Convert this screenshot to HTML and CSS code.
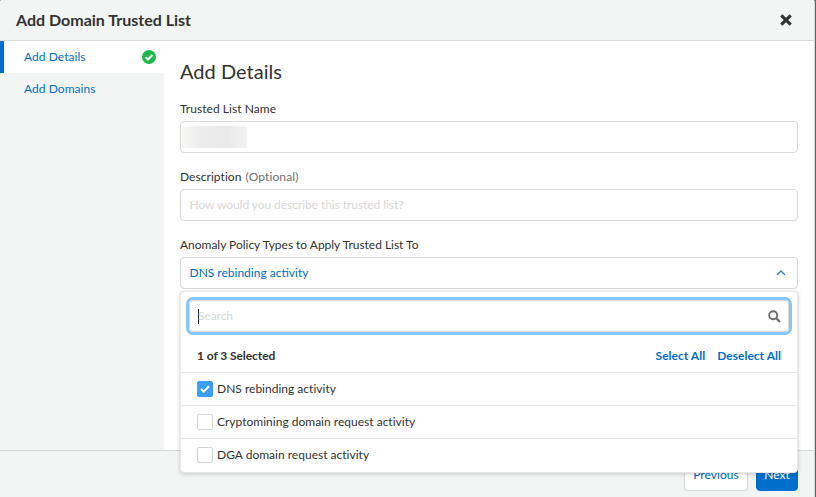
FILE: index.html
```html
<!DOCTYPE html>
<html lang="en">
<head>
<meta charset="utf-8">
<title>Add Domain Trusted List</title>
<link rel="stylesheet" href="styles.css">
</head>
<body>
<div class="modal">
  <header class="modal-header">
    <h1 class="modal-title">Add Domain Trusted List</h1>
    <svg class="close" width="12" height="12" viewBox="0 0 12 12"><path d="M1.3 1.3L10.7 10.7M10.7 1.3L1.3 10.7"/></svg>
  </header>
  <div class="modal-body">
    <nav class="steps">
      <div class="step active"><span>Add Details</span>
        <svg width="14" height="14" viewBox="0 0 14 14"><circle cx="7" cy="7" r="7" fill="#1fb749"/><path d="M3.6 7.2L6 9.5L10.4 5" fill="none" stroke="#fff" stroke-width="2"/></svg>
      </div>
      <div class="step"><span>Add Domains</span></div>
    </nav>
    <main class="content">
      <h2 class="heading">Add Details</h2>
      <div class="field">
        <div class="label">Trusted List Name</div>
        <div class="input"><span class="redacted"></span></div>
      </div>
      <div class="field">
        <div class="label">Description <span class="optional">(Optional)</span></div>
        <div class="input"><span class="placeholder">How would you describe this trusted list?</span></div>
      </div>
      <div class="field">
        <div class="label policy">Anomaly Policy Types to Apply Trusted List To</div>
        <div class="input select"><span class="value">DNS rebinding activity</span>
          <svg width="10" height="6" viewBox="0 0 10 6"><path d="M1 5L5 1L9 5" fill="none" stroke="#2583d6" stroke-width="1.3"/></svg>
        </div>
        <div class="dropdown">
          <div class="search"><span class="caret"></span><span class="placeholder">Search</span>
            <svg width="13" height="13" viewBox="0 0 13 13"><circle cx="5.2" cy="5.2" r="4" fill="none" stroke="#6d6d6d" stroke-width="1.9"/><path d="M8.2 8.2L12 12" stroke="#6d6d6d" stroke-width="2.2"/></svg>
          </div>
          <div class="summary"><span class="count">1 of 3 Selected</span><span class="link">Select All</span><span class="link deselect">Deselect All</span></div>
          <div class="option"><span class="box checked"><svg width="10" height="8" viewBox="0 0 10 8"><path d="M1 4L3.7 6.6L9 1.3" fill="none" stroke="#fff" stroke-width="2"/></svg></span><span>DNS rebinding activity</span></div>
          <div class="option"><span class="box"></span><span>Cryptomining domain request activity</span></div>
          <div class="option"><span class="box"></span><span>DGA domain request activity</span></div>
        </div>
      </div>
    </main>
  </div>
  <footer class="modal-footer">
    <div class="btn previous">Previous</div>
    <div class="btn next">Next</div>
  </footer>
</div>
</body>
</html>
```

FILE: styles.css
```css
* { box-sizing: border-box; }
body {
  margin: 0;
  width: 816px;
  height: 497px;
  overflow: hidden;
  background: #606162;
  font: 12px/16px Lato, sans-serif;
  letter-spacing: 0.05px;
  color: #333;
}
.modal {
  width: 815px;
  height: 497px;
  display: flex;
  flex-direction: column;
  background: #fff;
  border-right: 1px solid #d9dada;
  border-radius: 2px 2px 0 0;
  overflow: hidden;
}
.modal-header {
  height: 41px;
  flex: none;
  display: flex;
  align-items: center;
  justify-content: space-between;
  padding: 0 22px 0 16px;
  background: #f3f5f4;
  border-bottom: 1px solid #d9dbda;
}
.modal-title { margin: 0; font-size: 16px; font-weight: 700; letter-spacing: 0; }
.close { stroke: #333; stroke-width: 3.2; stroke-linecap: butt; }
.modal-body { height: 409px; flex: none; display: flex; }
.steps { width: 164px; background: #f3f5f4; }
.step {
  height: 32px;
  display: flex;
  align-items: center;
  justify-content: space-between;
  padding: 0 8px 0 20px;
  border-left: 4px solid transparent;
  color: #006fcc;
}
.step.active { background: #fff; border-left-color: #006fcc; }
.content { flex: 1; padding: 18px 16px 0; }
.heading { margin: 0 0 18px; font-size: 20px; line-height: 24px; font-weight: 400; letter-spacing: 0.03px; }
.field { position: relative; height: 52px; margin-bottom: 16px; }
.label { height: 16px; margin-bottom: 4px; }
.label.policy { letter-spacing: -0.02px; }
.optional { color: #707070; margin-left: 1px; letter-spacing: 0.12px; }
.input {
  height: 32px;
  display: flex;
  align-items: center;
  padding: 0 8.5px;
  background: #fff;
  border: 1px solid #d9dada;
  border-radius: 4px;
}
.redacted {
  width: 65px;
  height: 22px;
  margin-left: -7.5px;
  background: linear-gradient(90deg, #f8f8f6 0, #ececec 28%, #e9e9e9 70%, #f2f3f2 100%);
}
.placeholder { color: #d7d8d8; letter-spacing: -0.06px; }
.select { justify-content: space-between; padding-right: 11px; color: #006fcc; letter-spacing: 0; }
.dropdown {
  position: absolute;
  z-index: 1;
  top: 54px;
  left: 0;
  width: 618px;
  height: 182px;
  padding-top: 8px;
  background: #fff;
  border: 1px solid #e6e7e7;
  border-radius: 4px;
  box-shadow: 0 1px 4px rgba(0, 0, 0, 0.2);
}
.search {
  height: 32px;
  margin: 0 8px;
  display: flex;
  align-items: center;
  padding: 0 7.5px 0 8px;
  border: 1px solid #d9dada;
  border-radius: 4px;
  box-shadow: 0 0 0 3px #86c5f6;
}
.search svg { margin-left: auto; }
.caret { width: 1px; height: 15px; margin-right: -1px; background: #222; }
.summary {
  height: 40px;
  display: flex;
  align-items: center;
  padding: 7px 16px 0;
  font-weight: 700;
  letter-spacing: 0.02px;
}
.count { margin-right: auto; letter-spacing: -0.07px; }
.link { color: #006fcc; }
.deselect { margin-left: 12px; }
.option {
  height: 33px;
  display: flex;
  align-items: center;
  gap: 4px;
  padding-left: 16px;
  border-top: 1px solid #e6e7e7;
  letter-spacing: 0.01px;
}
.box {
  width: 16px;
  height: 16px;
  display: flex;
  align-items: center;
  justify-content: center;
  border: 1px solid #d4d5d5;
  border-radius: 2px;
}
.box.checked { background: #39a0ff; border-color: #39a0ff; }
.modal-footer {
  flex: 1;
  display: flex;
  justify-content: flex-end;
  gap: 8px;
  padding: 8px 16px 0;
  background: #f3f5f4;
  border-top: 1px solid #d5d7d7;
}
.btn {
  height: 32px;
  display: flex;
  align-items: center;
  justify-content: center;
  border: 1px solid #d4d7d7;
  border-radius: 4px;
  background: #fff;
  color: #006fcc;
}
.previous { width: 64px; }
.next { width: 42px; background: #006fcc; border-color: #006fcc; color: #fff; }
```
